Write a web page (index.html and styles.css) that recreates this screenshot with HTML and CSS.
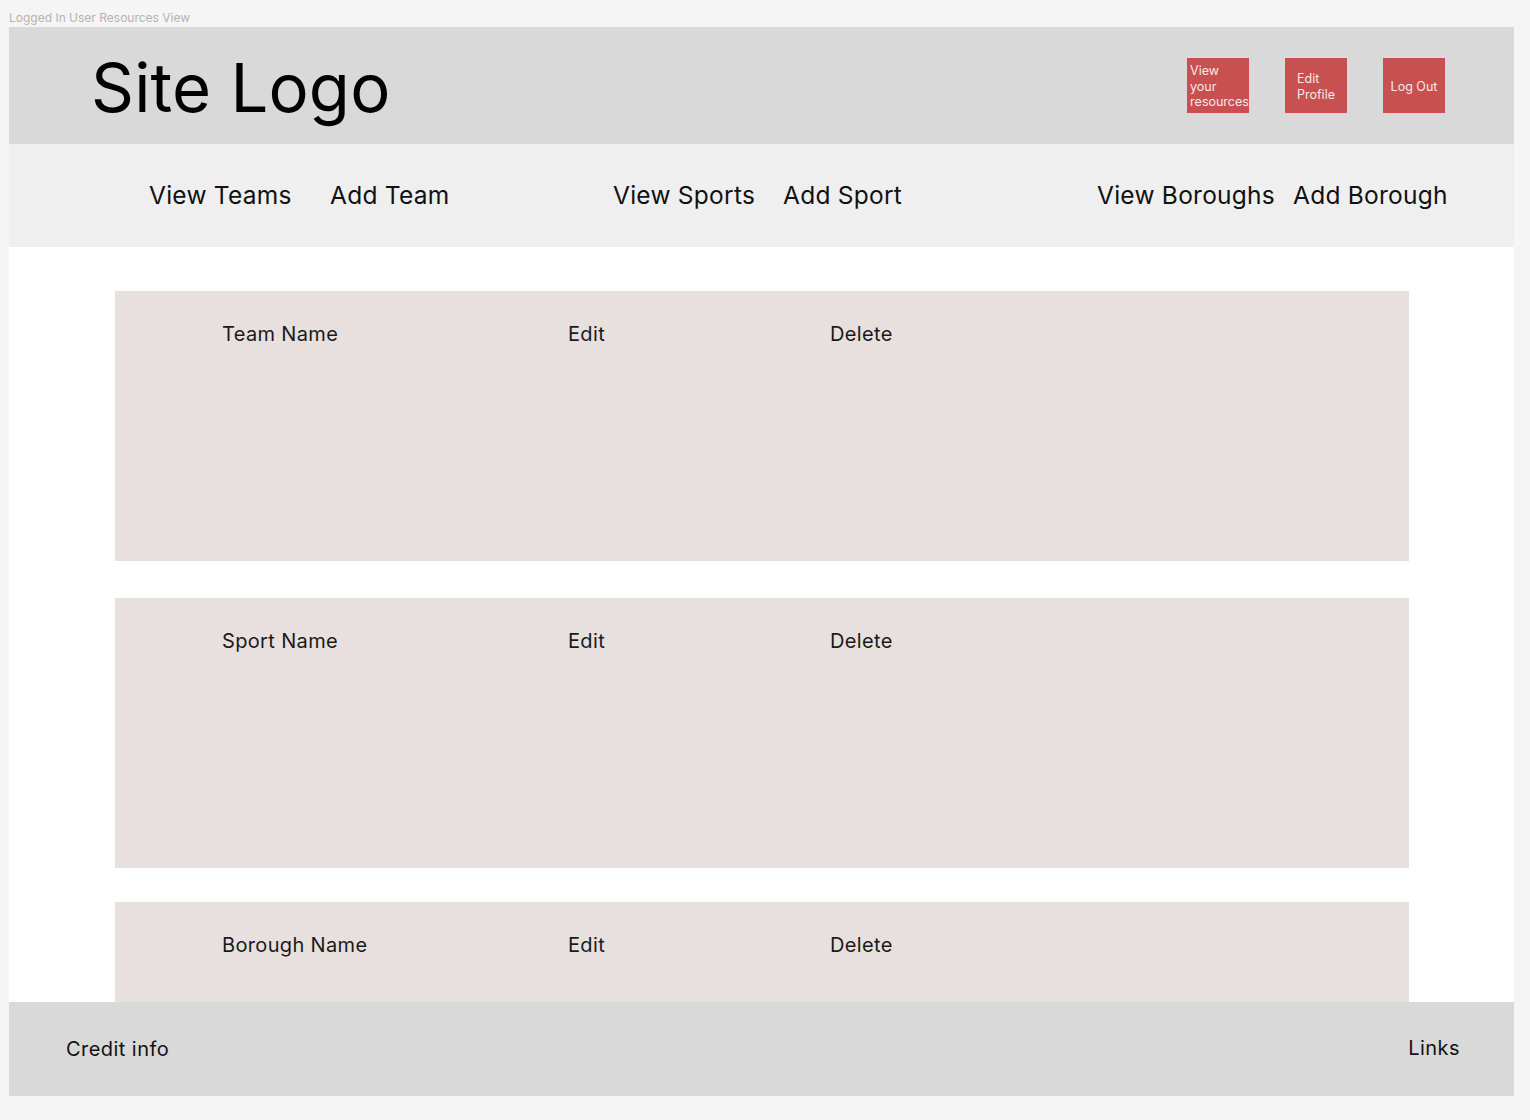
FILE: index.html
```html
<!DOCTYPE html>
<html lang="en">
<head>
<meta charset="utf-8">
<title>Logged In User Resources View</title>
<link rel="stylesheet" href="styles.css">
</head>
<body>
<div class="caption">Logged In User Resources View</div>
<div class="frame">
  <header class="header">
    <div class="logo">Site Logo</div>
    <div class="actions">
      <a class="btn"><span>View<br>your<br>resources</span></a>
      <a class="btn"><span>Edit<br>Profile</span></a>
      <a class="btn"><span>Log Out</span></a>
    </div>
  </header>
  <nav class="nav">
    <span class="nav-item">View Teams</span>
    <span class="nav-item">Add Team</span>
    <span class="nav-item">View Sports</span>
    <span class="nav-item">Add Sport</span>
    <span class="nav-item">View Boroughs</span>
    <span class="nav-item">Add Borough</span>
  </nav>
  <main class="main">
    <section class="card">
      <span>Team Name</span><span>Edit</span><span>Delete</span>
    </section>
    <section class="card">
      <span>Sport Name</span><span>Edit</span><span>Delete</span>
    </section>
    <section class="card card-last">
      <span>Borough Name</span><span>Edit</span><span>Delete</span>
    </section>
  </main>
  <footer class="footer">
    <span>Credit info</span>
    <span class="links">Links</span>
  </footer>
</div>
</body>
</html>
```

FILE: styles.css
```css
* { box-sizing: border-box; }
html, body { margin: 0; padding: 0; }
body {
  background: #f5f5f5;
  font-family: Inter, "Noto Sans", sans-serif;
  color: #111;
  width: 1530px;
  height: 1120px;
  overflow: hidden;
}
.caption {
  height: 27px;
  padding: 10px 0 0 9px;
  font-size: 12px;
  line-height: 16px;
  color: #b3b3b3;
}
.frame {
  margin-left: 9px;
  width: 1505px;
  display: flex;
  flex-direction: column;
}
.header {
  height: 117px;
  background: #d9d9d9;
  display: flex;
  align-items: center;
  justify-content: space-between;
  padding: 0 69px 0 82px;
}
.logo {
  font-size: 67px;
  line-height: 1;
  color: #000;
  padding-top: 4px;
  letter-spacing: 0.2px;
}
.actions {
  display: flex;
  gap: 36px;
}
.btn {
  width: 62px;
  height: 55px;
  background: #c85050;
  color: #f7e8e8;
  font-size: 12.5px;
  line-height: 15.5px;
  display: flex;
  align-items: center;
  justify-content: center;
  white-space: nowrap;
  padding-top: 2px;
}
.btn:first-child { padding-left: 3px; }
.btn span { text-align: left; }
.nav {
  height: 103px;
  background: #efefef;
  display: grid;
  grid-template-columns: 181px 283px 170px 314px 196px 1fr;
  align-items: center;
  padding-left: 140px;
  font-size: 24.5px;
  letter-spacing: 0.25px;
  color: #111;
  padding-bottom: 1px;
}
.main {
  height: 755px;
  background: #fff;
  overflow: hidden;
  display: flex;
  flex-direction: column;
  gap: 36px;
  padding: 44px 105px 0 106px;
}
.card {
  flex: 0 0 270px;
  background: #e8dfdf;
  display: grid;
  grid-template-columns: 346px 262px 1fr;
  align-content: start;
  padding: 31px 0 0 107px;
  font-size: 20px;
  line-height: 24px;
  letter-spacing: 0.35px;
  color: #1a1a1a;
}
.card:nth-child(2) { margin-top: 1px; }
.card-last { margin-top: -2px; }
.footer {
  height: 94px;
  background: #d9d9d9;
  display: flex;
  align-items: center;
  justify-content: space-between;
  padding: 0 54px 0 57px;
  font-size: 20px;
  letter-spacing: 0.45px;
  color: #111;
}
.links { margin-top: -3px; }
```
